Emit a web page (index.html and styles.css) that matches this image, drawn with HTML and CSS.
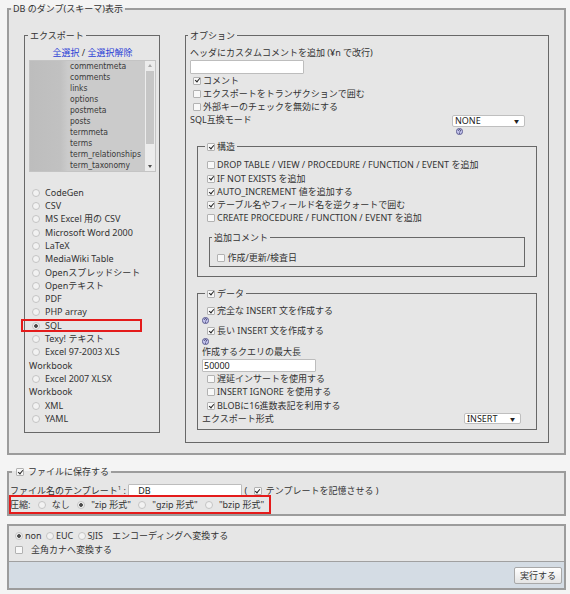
FILE: index.html
```html
<!DOCTYPE html>
<html lang="ja">
<head>
<meta charset="utf-8">
<title>DB のダンプ(スキーマ)表示</title>
<link rel="stylesheet" href="styles.css">
</head>
<body>
<form class="export-form">
  <fieldset class="fs-main fs-dump">
    <legend class="lg-main">DB のダンプ(スキーマ)表示</legend>
    <div class="dump-cols">
      <fieldset class="fs-sub fs-export">
        <legend class="lg-export">エクスポート</legend>
        <div class="sel-links"><a href="#">全選択</a> / <a href="#">全選択解除</a></div>
        <div class="tablelist">
          <div class="tl-blur"></div>
          <ul class="tl-names">
            <li>commentmeta</li>
            <li>comments</li>
            <li>links</li>
            <li>options</li>
            <li>postmeta</li>
            <li>posts</li>
            <li>termmeta</li>
            <li>terms</li>
            <li>term_relationships</li>
            <li>term_taxonomy</li>
          </ul>
          <div class="tl-scroll">
            <span class="sc-up"></span>
            <span class="sc-thumb"></span>
            <span class="sc-down"></span>
          </div>
        </div>
        <ul class="formats">
          <li><label><input type="radio" class="rd" name="what">CodeGen</label></li>
          <li><label><input type="radio" class="rd" name="what">CSV</label></li>
          <li><label><input type="radio" class="rd" name="what">MS Excel 用の CSV</label></li>
          <li><label><input type="radio" class="rd" name="what">Microsoft Word 2000</label></li>
          <li><label><input type="radio" class="rd" name="what">LaTeX</label></li>
          <li><label><input type="radio" class="rd" name="what">MediaWiki Table</label></li>
          <li><label><input type="radio" class="rd" name="what">Openスプレッドシート</label></li>
          <li><label><input type="radio" class="rd" name="what">Openテキスト</label></li>
          <li><label><input type="radio" class="rd" name="what">PDF</label></li>
          <li><label><input type="radio" class="rd" name="what">PHP array</label></li>
          <li class="marked"><label><input type="radio" class="rd" name="what" checked>SQL</label></li>
          <li><label><input type="radio" class="rd" name="what">Texy! テキスト</label></li>
          <li><label><input type="radio" class="rd" name="what">Excel 97-2003 XLS Workbook</label></li>
          <li><label><input type="radio" class="rd" name="what">Excel 2007 XLSX Workbook</label></li>
          <li><label><input type="radio" class="rd" name="what">XML</label></li>
          <li><label><input type="radio" class="rd" name="what">YAML</label></li>
        </ul>
      </fieldset>

      <fieldset class="fs-sub fs-options">
        <legend class="lg-options">オプション</legend>
        <div class="line">ヘッダにカスタムコメントを追加 (¥n で改行)</div>
        <input type="text" class="txt">
        <label class="cbl cbl-top"><input type="checkbox" class="cb" checked>コメント</label>
        <label class="cbl cbl-top"><input type="checkbox" class="cb">エクスポートをトランザクションで囲む</label>
        <label class="cbl cbl-top"><input type="checkbox" class="cb">外部キーのチェックを無効にする</label>
        <div class="compat-row">
          <span class="compat-label">SQL互換モード</span>
          <div class="compat-ctl">
            <span class="sel sel-none">NONE</span>
            <svg class="help" width="7" height="7" viewBox="0 0 14 14"><circle cx="7" cy="7" r="6.2" fill="#c6c6ee" stroke="#3d3d78" stroke-width="1.5"/><path d="M4.9 5.4a2.1 2.1 0 1 1 2.9 1.8c-.6.3-.8.6-.8 1.3" fill="none" stroke="#2a2a58" stroke-width="1.6"/><circle cx="7" cy="10.5" r="1" fill="#2a2a58"/></svg>
          </div>
        </div>

        <fieldset class="fs-in fs-struct">
          <legend class="lg-in"><label><input type="checkbox" class="cb" checked>構造</label></legend>
          <label class="cbl cbl-in"><input type="checkbox" class="cb">DROP TABLE / VIEW / PROCEDURE / FUNCTION / EVENT を追加</label>
          <label class="cbl cbl-in"><input type="checkbox" class="cb" checked>IF NOT EXISTS を追加</label>
          <label class="cbl cbl-in"><input type="checkbox" class="cb" checked>AUTO_INCREMENT 値を追加する</label>
          <label class="cbl cbl-in"><input type="checkbox" class="cb" checked>テーブル名やフィールド名を逆クォートで囲む</label>
          <label class="cbl cbl-in"><input type="checkbox" class="cb">CREATE PROCEDURE / FUNCTION / EVENT を追加</label>
          <fieldset class="fs-in fs-comments">
            <legend class="lg-comments">追加コメント</legend>
            <label class="cbl cbl-cm"><input type="checkbox" class="cb">作成/更新/検査日</label>
          </fieldset>
        </fieldset>

        <fieldset class="fs-in fs-data">
          <legend class="lg-in"><label><input type="checkbox" class="cb" checked>データ</label></legend>
          <label class="cbl cbl-in"><input type="checkbox" class="cb" checked>完全な INSERT 文を作成する</label>
          <div class="help-line"><svg class="help" width="7" height="7" viewBox="0 0 14 14"><circle cx="7" cy="7" r="6.2" fill="#c6c6ee" stroke="#3d3d78" stroke-width="1.5"/><path d="M4.9 5.4a2.1 2.1 0 1 1 2.9 1.8c-.6.3-.8.6-.8 1.3" fill="none" stroke="#2a2a58" stroke-width="1.6"/><circle cx="7" cy="10.5" r="1" fill="#2a2a58"/></svg></div>
          <label class="cbl cbl-in"><input type="checkbox" class="cb" checked>長い INSERT 文を作成する</label>
          <div class="help-line"><svg class="help" width="7" height="7" viewBox="0 0 14 14"><circle cx="7" cy="7" r="6.2" fill="#c6c6ee" stroke="#3d3d78" stroke-width="1.5"/><path d="M4.9 5.4a2.1 2.1 0 1 1 2.9 1.8c-.6.3-.8.6-.8 1.3" fill="none" stroke="#2a2a58" stroke-width="1.6"/><circle cx="7" cy="10.5" r="1" fill="#2a2a58"/></svg></div>
          <div class="line">作成するクエリの最大長</div>
          <input type="text" class="txt" value="50000">
          <label class="cbl cbl-in"><input type="checkbox" class="cb">遅延インサートを使用する</label>
          <label class="cbl cbl-in"><input type="checkbox" class="cb">INSERT IGNORE を使用する</label>
          <label class="cbl cbl-in"><input type="checkbox" class="cb" checked>BLOBに16進数表記を利用する</label>
          <div class="format-row">
            <span class="format-label">エクスポート形式</span>
            <span class="sel sel-insert">INSERT</span>
          </div>
        </fieldset>
      </fieldset>
    </div>
  </fieldset>

  <fieldset class="fs-main fs-file">
    <legend class="lg-file"><label><input type="checkbox" class="cb" checked>ファイルに保存する</label></legend>
    <div class="file-row">ファイル名のテンプレート<sup>1</sup> : <input type="text" class="txt txt-inline" value="__DB__"> ( <label><input type="checkbox" class="cb cb-remember" checked>テンプレートを記憶させる</label> )</div>
    <div class="file-row comp-row">圧縮: <label><input type="radio" class="rd" name="comp">なし</label> <label><input type="radio" class="rd" name="comp" checked>"zip 形式"</label> <label><input type="radio" class="rd" name="comp">"gzip 形式"</label> <label><input type="radio" class="rd" name="comp">"bzip 形式"</label></div>
  </fieldset>

  <div class="box">
    <div class="box-body">
      <div class="enc-row"><label><input type="radio" class="rd" name="enc" checked>non</label> <label><input type="radio" class="rd" name="enc">EUC</label> <label><input type="radio" class="rd" name="enc">SJIS</label><span class="enc-text">エンコーディングへ変換する</span></div>
      <div class="enc-row"><label><input type="checkbox" class="cb cb-kana">全角カナへ変換する</label></div>
    </div>
    <div class="box-foot"><button type="button" class="btn">実行する</button></div>
  </div>
</form>
</body>
</html>
```

FILE: styles.css
```css
* { box-sizing: border-box; }
html, body { margin: 0; padding: 0; }
body {
  background: #f4f4f4;
  font-family: "Noto Sans", "Noto Sans CJK JP", sans-serif;
  font-size: 9px;
  line-height: 13.3px;
  color: #333;
}
form { margin: 0; }
ul { list-style: none; margin: 0; padding: 0; }
label { cursor: default; }
fieldset { margin: 0; padding: 0; min-width: 0; }
legend { padding: 0 2px; line-height: 13px; }
sup { font-size: 6px; line-height: 0; vertical-align: 4px; }

/* controls */
.cb {
  -webkit-appearance: none;
  appearance: none;
  margin: 0 2px 0 0;
  width: 8px;
  height: 8px;
  border: 1px solid #b2b2b2;
  border-radius: 1px;
  background: #f8f8f8;
  vertical-align: -1px;
  position: relative;
}
.cb:checked::after {
  content: "";
  position: absolute;
  left: 1.8px;
  top: -0.2px;
  width: 2px;
  height: 4px;
  border: solid #262626;
  border-width: 0 1.4px 1.4px 0;
  transform: rotate(40deg);
}
.rd {
  -webkit-appearance: none;
  appearance: none;
  margin: 0 5px 0 3px;
  width: 8px;
  height: 8px;
  border: 1px solid #c4c4c4;
  border-radius: 50%;
  background: #f2f2f2;
  vertical-align: -1px;
}
.rd:checked { background: radial-gradient(circle, #4a4a4a 0 1.5px, #f2f2f2 2.2px); }
.txt {
  display: block;
  width: 114px;
  height: 13.3px;
  margin: 1px 0 0;
  padding: 0 1px;
  border: 1px solid #bdbdbd;
  border-radius: 1px;
  background: #fff;
  font: inherit;
  color: #222;
}
.sel {
  display: block;
  position: relative;
  height: 12px;
  line-height: 10px;
  padding: 0 2px;
  border: 1px solid #bfbfbf;
  border-radius: 2px;
  background: #fff;
  color: #222;
}
.sel::after {
  content: "\25BC";
  position: absolute;
  right: 5px;
  top: 0;
  font-size: 5px;
  color: #222;
}
.help { display: block; }

/* main fieldsets */
.fs-main {
  margin: 2px 4px 0 7px;
  border: 2px solid #9c9c9c;
  background: #e6e6e6;
}
.lg-main { margin-left: 2px; }
.dump-cols {
  display: flex;
  align-items: flex-start;
  gap: 25px;
  padding: 14px 15px 10px;
}
.fs-sub { border: 1px solid #686868; }

/* export column */
.fs-export {
  flex: none;
  width: 136px;
  padding: 4px 3px 7px 4px;
}
.lg-export { margin-left: -1px; }
.sel-links { text-align: center; }
.sel-links a { color: #2b3fd6; text-decoration: none; }
.tablelist {
  display: flex;
  height: 112px;
  margin-top: 1px;
  border: 1px solid #c4c4c4;
  background: #cbcbcb;
  font-family: "DejaVu Sans Condensed", "DejaVu Sans", sans-serif;
  font-size: 8.5px;
  line-height: 11px;
  color: #3a3a3a;
}
.tl-blur {
  flex: none;
  width: 38px;
  background: linear-gradient(to right, #bdbdbd 0, #c1c1c1 80%, #cbcbcb 100%);
}
.tl-names {
  flex: 1;
  min-width: 0;
  padding: 0 0 0 2px;
  white-space: nowrap;
  overflow: hidden;
}
.tl-scroll {
  flex: none;
  width: 10px;
  display: flex;
  flex-direction: column;
  align-items: center;
  background: #ececec;
  padding: 3px 0;
}
.sc-up, .sc-down { width: 0; height: 0; border-left: 2.5px solid transparent; border-right: 2.5px solid transparent; }
.sc-up { border-bottom: 3px solid #a8a8a8; }
.sc-down { border-top: 3px solid #505050; }
.sc-thumb { width: 8px; height: 73px; margin: 4px 0 auto; background: #c6c6c6; }
.formats { margin-top: 13.5px; }
.formats .rd { margin: 0 5px 0 3px; }
.marked { position: relative; }
.marked::after {
  content: "";
  position: absolute;
  left: -8px;
  right: 14px;
  top: 0;
  bottom: 0;
  border: 2px solid #e41b1b;
}

/* options column */
.fs-options {
  flex: 1;
  padding: 4px 0 12px 4px;
}
.lg-options { margin-left: -2px; }
.line { display: block; }
.cbl { display: block; }
.cbl-top { padding-left: 3px; }
.cbl-in { padding-left: 5px; }
.compat-row { display: flex; align-items: flex-start; }
.compat-label { flex: 1; }
.compat-ctl { flex: none; width: 73px; margin: 1.6px 23px 0 0; }
.sel-none { height: 11.7px; }
.compat-ctl .help { margin: 1.5px 0 0 4px; }

.fs-in { border: 1px solid #686868; }
.lg-in { margin-left: 3px; }
.lg-in .cb { margin-right: 2px; }
.fs-struct { margin: 5px 11px 0 7px; padding: 5px 0 9px 4px; }
.fs-comments { margin: 6.6px 11px 0 7px; padding: 6.2px 0 2.4px 4px; }
.lg-comments { margin-left: -2px; }
.cbl-cm { padding-left: 3.4px; }
.fs-data { margin: 9.4px 11px 0 7px; padding: 4.3px 0 4px 4px; }
.help-line { height: 7px; }
.format-row { display: flex; align-items: flex-start; }
.format-label { flex: 1; }
.sel-insert { flex: none; width: 57px; height: 11px; margin: 1.4px 15px 0 0; }

/* save to file */
.fs-file { margin-top: 10px; padding: 6px 0 3.5px 1px; }
.lg-file { margin-left: 2px; }
.lg-file .cb { margin: 0 4px 0 2px; }
.file-row { white-space: nowrap; }
.txt-inline { display: inline-block; vertical-align: top; margin: 0; height: 13px; }
.cb-remember { margin: 0 4px 0 4px; }
.comp-row { position: relative; }
.comp-row .rd { margin: 0 6px 0 5px; }
.comp-row::after {
  content: "";
  position: absolute;
  left: -1px;
  width: 258px;
  top: -3px;
  bottom: -3px;
  border: 2px solid #e41b1b;
}

/* charset box */
.box {
  margin: 8px 4px 0 7px;
  border: 2px solid #9c9c9c;
  background: #e6e6e6;
}
.box-body { padding: 3px 0 5px 4px; }
.enc-row .rd { margin: 0 2px 0 2px; }
.enc-text { margin-left: 9px; }
.cb-kana { margin: 0 8.5px 0 1.5px; }
.box-foot {
  display: flex;
  justify-content: flex-end;
  padding: 5px 2px 4px;
  border-top: 1px solid #a0a0a0;
  background: #d4dce4;
}
.btn {
  height: 17px;
  padding: 0 5px;
  border: 1px solid #a8a8a8;
  border-radius: 2px;
  background: linear-gradient(#ffffff, #e4e4e4);
  font: inherit;
  color: #333;
}
```
